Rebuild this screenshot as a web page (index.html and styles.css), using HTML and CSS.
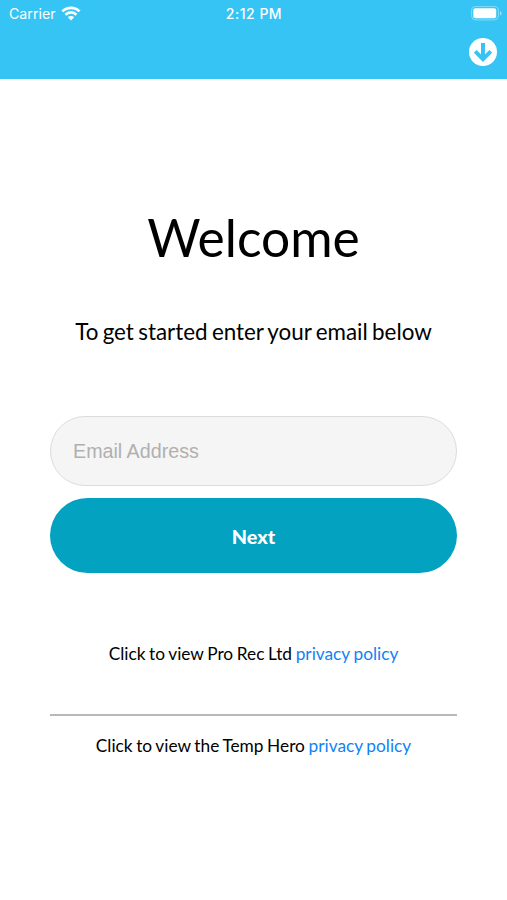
FILE: index.html
```html
<!DOCTYPE html>
<html lang="en">
<head>
    <meta charset="utf-8">
    <title>Welcome</title>
    <link rel="stylesheet" href="styles.css">
</head>
<body>
    <header class="header">
        <div class="status-bar">
            <div class="carrier">
                <span>Carrier</span>
                <svg class="wifi" viewBox="0 0 20 15">
                    <path d="M1.4 5.4a12.2 12.2 0 0 1 17.2 0M4.5 8.7a7.8 7.8 0 0 1 11 0" fill="none" stroke="#fff" stroke-width="2.7"/>
                    <path d="M6.8 11.2a4.6 4.6 0 0 1 6.4 0L10 14.4z" fill="#fff"/>
                </svg>
            </div>
            <span class="time">2:12 PM</span>
            <svg class="battery" viewBox="0 0 31 15">
                <rect x=".6" y=".6" width="26.8" height="13.3" rx="4" fill="none" stroke="#fff" stroke-opacity=".4"/>
                <rect x="2.3" y="2.3" width="22.9" height="9.9" rx="2" fill="#fff"/>
                <path d="M29 5v4.6q1.5-.7 1.5-2.3T29 5z" fill="#fff" fill-opacity=".5"/>
            </svg>
        </div>
        <div class="toolbar">
            <svg class="download" viewBox="0 0 28 28">
                <circle cx="14" cy="14" r="14" fill="#fff"/>
                <path d="M14 5v16M6.2 13.4l7.8 7.8 7.8-7.8" fill="none" stroke="#35c4f3" stroke-width="4"/>
            </svg>
        </div>
    </header>

    <main class="content">
        <h1>Welcome</h1>
        <p class="intro">To get started enter your email below</p>

        <form>
            <input type="email" class="email" placeholder="Email Address">
            <button type="button" class="btn">Next</button>
        </form>

        <p class="policy">Click to view Pro Rec Ltd <a href="#">privacy policy</a></p>
        <hr>
        <p class="policy">Click to view the Temp Hero <a href="#">privacy policy</a></p>
    </main>
</body>
</html>
```
FILE: styles.css
```css
* {
    box-sizing: border-box;
}

body {
    margin: 0;
    background-color: #fff;
    color: #000;
    font-family: Lato, sans-serif;
}

.header {
    height: 79px;
    background-color: #35c4f3;
    color: #fff;
}

.status-bar {
    display: grid;
    grid-template-columns: 1fr auto 1fr;
    align-items: center;
    height: 27px;
    padding: 0 5px 0 9px;
    font-family: Inter, sans-serif;
    font-size: 14.2px;
}

.carrier {
    display: flex;
    align-items: center;
    gap: 5px;
}

.wifi {
    width: 20px;
    height: 15px;
}

.time {
    margin-right: 3px;
    font-size: 14px;
    font-weight: 500;
    letter-spacing: 0.5px;
}

.battery {
    width: 31px;
    height: 15px;
    justify-self: end;
}

.toolbar {
    display: flex;
    justify-content: flex-end;
    padding: 11px 10px 0 0;
}

.download {
    width: 28px;
    height: 28px;
}

.content {
    padding: 126px 50px 0;
    text-align: center;
}

h1 {
    margin: 0;
    font-size: 51.5px;
    font-weight: 400;
    line-height: 64px;
}

.intro {
    margin: 49px 0 0;
    font-size: 22.4px;
    line-height: 28px;
    word-spacing: -1.4px;
}

form {
    margin-top: 70px;
}

.email {
    display: block;
    width: 100%;
    height: 70px;
    padding: 0 22px;
    border: 1px solid #dcdcdc;
    border-radius: 35px;
    background-color: #f5f5f5;
    font-family: "Liberation Sans", sans-serif;
    font-size: 19.7px;
}

.email::placeholder {
    color: #b0b0b0;
}

.btn {
    display: block;
    width: 100%;
    height: 75px;
    margin-top: 12px;
    border: none;
    border-radius: 38px;
    background-color: #02a2c0;
    color: #fff;
    font-family: Lato, sans-serif;
    font-size: 19.8px;
    font-weight: 900;
}

.policy {
    margin: 0;
    font-size: 17.3px;
    line-height: 22px;
    word-spacing: -0.8px;
}

.policy a {
    color: #0f83f5;
    text-decoration: none;
}

form + .policy {
    margin-top: 70px;
}

hr {
    height: 2px;
    margin: 49px 0 19px;
    border: none;
    background-color: #b8b8b8;
}
```
